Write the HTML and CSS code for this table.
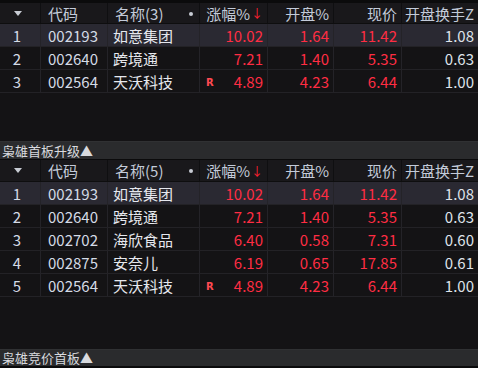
FILE: index.html
```html
<!DOCTYPE html>
<html>
<head>
<meta charset="utf-8">
<link rel="stylesheet" href="styles.css">
</head>
<body>
<div class="app">
  <div class="topline"></div>
  <section class="panel">
    <div class="row head">
      <div class="c idx"><span class="tri"></span></div>
      <div class="c code">代码</div>
      <div class="c name">名称(3)<span class="dot"></span></div>
      <div class="c num">涨幅%<span class="arrow">↓</span></div>
      <div class="c num">开盘%</div>
      <div class="c num">现价</div>
      <div class="c num">开盘换手Z</div>
    </div>
    <div class="row sel">
      <div class="c idx">1</div><div class="c code">002193</div><div class="c name">如意集团</div>
      <div class="c num red">10.02</div><div class="c num red">1.64</div><div class="c num red">11.42</div><div class="c num wh">1.08</div>
    </div>
    <div class="row">
      <div class="c idx">2</div><div class="c code">002640</div><div class="c name">跨境通</div>
      <div class="c num red">7.21</div><div class="c num red">1.40</div><div class="c num red">5.35</div><div class="c num wh">0.63</div>
    </div>
    <div class="row">
      <div class="c idx">3</div><div class="c code">002564</div><div class="c name">天沃科技</div>
      <div class="c num red"><span class="r">R</span>4.89</div><div class="c num red">4.23</div><div class="c num red">6.44</div><div class="c num wh">1.00</div>
    </div>
    <div class="fill f1"></div>
  </section>
  <div class="bar">枭雄首板升级▲</div>
  <section class="panel">
    <div class="row head head2">
      <div class="c idx"><span class="tri"></span></div>
      <div class="c code">代码</div>
      <div class="c name">名称(5)<span class="dot"></span></div>
      <div class="c num">涨幅%<span class="arrow">↓</span></div>
      <div class="c num">开盘%</div>
      <div class="c num">现价</div>
      <div class="c num">开盘换手Z</div>
    </div>
    <div class="row sel">
      <div class="c idx">1</div><div class="c code">002193</div><div class="c name">如意集团</div>
      <div class="c num red">10.02</div><div class="c num red">1.64</div><div class="c num red">11.42</div><div class="c num wh">1.08</div>
    </div>
    <div class="row">
      <div class="c idx">2</div><div class="c code">002640</div><div class="c name">跨境通</div>
      <div class="c num red">7.21</div><div class="c num red">1.40</div><div class="c num red">5.35</div><div class="c num wh">0.63</div>
    </div>
    <div class="row">
      <div class="c idx">3</div><div class="c code">002702</div><div class="c name">海欣食品</div>
      <div class="c num red">6.40</div><div class="c num red">0.58</div><div class="c num red">7.31</div><div class="c num wh">0.60</div>
    </div>
    <div class="row">
      <div class="c idx">4</div><div class="c code">002875</div><div class="c name">安奈儿</div>
      <div class="c num red">6.19</div><div class="c num red">0.65</div><div class="c num red">17.85</div><div class="c num wh">0.61</div>
    </div>
    <div class="row">
      <div class="c idx">5</div><div class="c code">002564</div><div class="c name">天沃科技</div>
      <div class="c num red"><span class="r">R</span>4.89</div><div class="c num red">4.23</div><div class="c num red">6.44</div><div class="c num wh">1.00</div>
    </div>
    <div class="fill f2"></div>
  </section>
  <div class="bar bar2">枭雄竞价首板▲</div>
  <div class="bottom"></div>
</div>
</body>
</html>
```
FILE: styles.css
```css
* { box-sizing: border-box; }
html, body { margin: 0; padding: 0; background: #131214; }
body {
  font-family: "Noto Sans CJK SC", "Microsoft YaHei", sans-serif;
  font-size: 15px;
  width: 478px;
  height: 368px;
  overflow: hidden;
}
.app { display: flex; flex-direction: column; height: 368px; }
.topline { height: 3px; background: #0b0b0c; }
.panel { display: flex; flex-direction: column; background: #141315; }
.row {
  display: grid;
  grid-template-columns: 41px 67px 92px 68px 66px 68px 76px;
  height: 23px;
  border-bottom: 1px solid #232226;
  background: #141315;
}
.row.head { height: 21px; background: #19181b; border-bottom: 1px solid #0e0e0f; }
.row.head2 { height: 23px; border-top: 1px solid #0b0b0c; }
.row.sel { background: #2a2932; }
.c {
  border-right: 1px solid #242328;
  display: flex;
  align-items: center;
  line-height: 1;
  white-space: nowrap;
  color: #d4dbe6;
  position: relative;
}
.head .c { color: #c3cbd9; border-right-color: #0f0f11; }
.idx { justify-content: center; padding-right: 6px; }
.code { padding-left: 7px; }
.name { padding-left: 5px; color: #e6e8ee; }
.head .name { padding-left: 7px; }
.num { justify-content: flex-end; padding-right: 4px; }
.c:last-child { border-right: none; }
.red { color: #ff2d43; }
.wh { color: #dfe3ea; }
.tri {
  width: 0; height: 0;
  border-left: 4px solid transparent;
  border-right: 4px solid transparent;
  border-top: 5px solid #c8ccd4;
  margin-left: 2px;
}
.dot {
  position: absolute; right: 6px; top: 9px;
  width: 4px; height: 4px; border-radius: 50%; background: #c8ccd4;
}
.arrow { color: #ff2030; font-size: 12px; margin-left: 1px; }
.r {
  position: absolute; left: 6px; top: 8px;
  font-family: "DejaVu Sans", sans-serif;
  font-weight: bold; font-size: 10px; color: #ff4a52;
}
.fill { background: #141315; }
.f1 { height: 48px; }
.f2 { height: 52px; }
.bar {
  height: 18px;
  background: #2a2b2d;
  border-top: 1px solid #303133;
  color: #d8dade;
  font-size: 13px;
  line-height: 17px;
  padding-left: 2px;
}
.bar2 { height: 17px; line-height: 16px; }
.bottom { flex: 1; background: #0b0b0c; }
```
